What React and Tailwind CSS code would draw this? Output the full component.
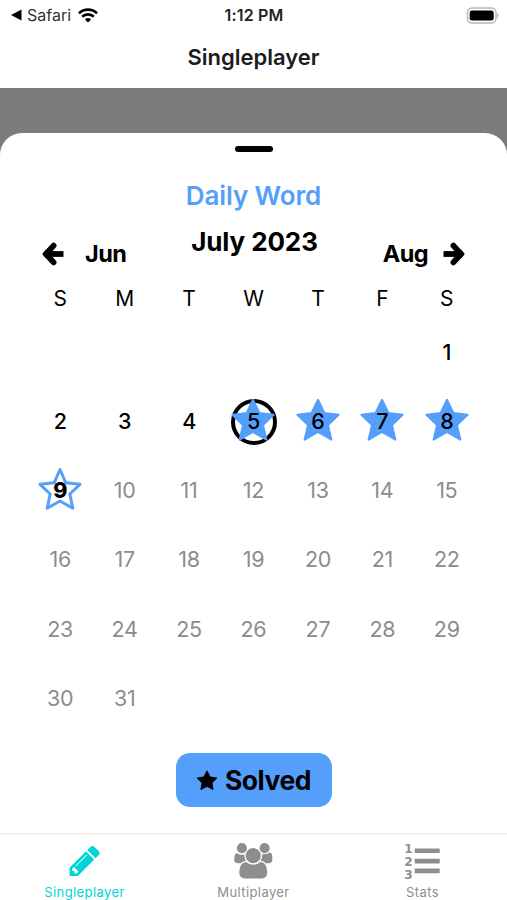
import clsx from 'clsx'

// ── Icons ───────────────────────────────────────────────────────────────────

function WifiIcon() {
  return (
    <svg width="20" height="15" viewBox="0 0 20 15" fill="none" stroke="currentColor" strokeWidth="2.7">
      <path d="M1 5.4a12.8 12.8 0 0 1 18 0" />
      <path d="M4.2 8.7a8.3 8.3 0 0 1 11.600 0" />
      <path d="M10 14.600 6.900 11.500a4.500 4.500 0 0 1 6.200 0Z" fill="currentColor" stroke="none" />
    </svg>
  )
}

function BatteryIcon() {
  return (
    <svg width="33" height="17" viewBox="0 0 33 17">
      <rect x="1.500" y="1" width="28.500" height="15" rx="4.500" fill="none" stroke="#b8b8b8" strokeWidth="1.500" />
      <rect x="3.700" y="3.400" width="24" height="10.200" rx="2.300" fill="#000" />
      <path d="M31.200 6.200v4.600q1.500-.7 1.500-2.300t-1.500-2.300Z" fill="#b8b8b8" />
    </svg>
  )
}

function ArrowIcon({ className }) {
  return (
    <svg className={className} width="24" height="26" viewBox="0 0 24 26" fill="none" stroke="currentColor" strokeWidth="5.800">
      <path d="M12.600 4.600 5 13l7.600 8.400" strokeLinecap="round" strokeLinejoin="round" />
      <path d="M5 13h17.500" />
      <path d="M1.200 13 5 8.800v8.400Z" fill="currentColor" stroke="none" />
    </svg>
  )
}

function DayStar({ outline }) {
  return (
    <svg
      className="absolute -mt-[3px] size-[44px] text-[#559ffc]"
      viewBox="0 0 44 44"
      fill={outline ? 'none' : 'currentColor'}
      stroke="currentColor"
      strokeWidth={outline ? 3 : 2}
      strokeLinejoin="round"
    >
      <path
        d={
          outline
            ? 'M22 2.500 27.800 15.800 42 17.300 31.800 27 34.800 41.200 22 34 9.200 41.200 12.200 27 2 17.300 16.200 15.800Z'
            : 'M22 1.800 28.400 15 42.600 16.800 32 27 35.400 41.700 22 34 8.600 41.700 12 27 1.400 16.800 15.600 15Z'
        }
      />
    </svg>
  )
}

function StarIcon() {
  return (
    <svg width="22" height="22" viewBox="0 0 1792 1792" fill="currentColor">
      <path d="M1728 647q0 22-26 48l-363 354 86 500q1 7 1 20 0 21-10.500 35.500t-30.500 14.500q-19 0-40-12l-449-236-449 236q-22 12-40 12-21 0-31.500-14.500t-10.500-35.500q0-6 2-20l86-500-364-354q-25-27-25-48 0-37 56-46l502-73 225-455q19-41 49-41t49 41l225 455 502 73q56 9 56 46z" />
    </svg>
  )
}

function PencilIcon() {
  return (
    <svg width="35.500" height="35.500" viewBox="0 0 1792 1792" fill="currentColor">
      <path d="M491 1536l91-91-235-235-91 91v107h128v128h107zm523-928q0-22-22-22-10 0-17 7l-542 542q-7 7-7 17 0 22 22 22 10 0 17-7l542-542q7-7 7-17zm-54-192l416 416-832 832h-416v-416zm683 96q0 53-37 90l-166 166-416-416 166-165q36-38 90-38 53 0 91 38l235 234q37 39 37 91z" />
    </svg>
  )
}

function UsersIcon() {
  return (
    <svg width="40.500" height="35.500" viewBox="0 0 2048 1792" fill="currentColor">
      <path d="M657 896q-162 5-265 128h-134q-82 0-138-40.500t-56-118.500q0-353 124-353 6 0 43.500 21t97.500 42.500 119 21.500q67 0 133-23-5 37-5 66 0 159 93 293zm1071 637q0 120-73 189.500t-194 69.500h-874q-121 0-194-69.500t-73-189.500q0-53 3.500-103.500t14-109 26.500-108.500 43-97.500 62-81 85.500-53.500 111.500-20q10 0 43 21.500t73 48 107 48 135 21.500 135-21.500 107-48 73-48 43-21.500q61 0 111.500 20t85.500 53.500 62 81 43 97.500 26.500 108.500 14 109 3.500 103.500zm-1024-1277q0 106-75 181t-181 75-181-75-75-181 75-181 181-75 181 75 75 181zm704 384q0 159-112.500 271.500t-271.500 112.500-271.500-112.500-112.500-271.500 112.500-271.500 271.500-112.500 271.500 112.500 112.500 271.500zm576 225q0 78-56 118.500t-138 40.500h-134q-103-123-265-128 93-134 93-293 0-29-5-66 66 23 133 23 59 0 119-21.500t97.500-42.500 43.500-21q124 0 124 353zm-128-609q0 106-75 181t-181 75-181-75-75-181 75-181 181-75 181 75 75 181z" />
    </svg>
  )
}

function StatsIcon() {
  return (
    <svg className="overflow-visible" width="36" height="37" viewBox="0 0 36 37" fill="currentColor">
      <g fontFamily="DejaVu Sans" fontWeight="700" fontSize="13">
        <text x="-0.700" y="10.400" textLength="8.800" lengthAdjust="spacingAndGlyphs">1</text>
        <text x="-0.700" y="22.900" textLength="8.800" lengthAdjust="spacingAndGlyphs">2</text>
        <text x="-0.700" y="35.700" textLength="8.800" lengthAdjust="spacingAndGlyphs">3</text>
      </g>
      <rect x="9.700" y="5.400" width="25" height="4.700" rx="0.600" />
      <rect x="9.700" y="15.700" width="25" height="4.700" rx="0.600" />
      <rect x="9.700" y="25.600" width="25" height="4.700" rx="0.600" />
    </svg>
  )
}

// ── Calendar data ───────────────────────────────────────────────────────────

const WEEKDAYS = ['S', 'M', 'T', 'W', 'T', 'F', 'S']
const FIRST_WEEKDAY = 6
const DAYS_IN_MONTH = 31
const TODAY = 9
const SELECTED = 5
const SOLVED = [5, 6, 7, 8]

const CELLS = [
  ...Array(FIRST_WEEKDAY).fill(null),
  ...Array.from({ length: DAYS_IN_MONTH }, (_, i) => i + 1),
]

const TABS = [
  { id: 'single', label: 'Singleplayer', icon: <PencilIcon />, active: true },
  { id: 'multi', label: 'Multiplayer', icon: <UsersIcon /> },
  { id: 'stats', label: 'Stats', icon: <StatsIcon /> },
]

function Day({ day }) {
  if (!day) return <div />

  return (
    <button className="relative flex items-center justify-center">
      {day === SELECTED && (
        <span className="absolute ml-px size-[46px] rounded-full border-4 border-black" />
      )}
      {SOLVED.includes(day) && <DayStar />}
      {day === TODAY && <DayStar outline />}
      <span
        className={clsx(
          'relative text-[21.5px] leading-none tracking-[-0.3px]',
          day < TODAY && 'font-medium text-black',
          day === TODAY && 'font-extrabold text-black',
          day > TODAY && 'text-[#8c8c8c]',
        )}
      >
        {day}
      </span>
    </button>
  )
}

export default function App() {
  return (
    <div className="flex h-[900px] w-[507px] flex-col overflow-hidden bg-white font-['Inter',sans-serif] text-black">
      {/* Status bar */}
      <div className="grid h-[30px] shrink-0 grid-cols-3 items-center pr-2 pl-[11px] text-[16px]">
        <div className="flex items-center">
          <svg width="11" height="12" viewBox="0 0 11 12">
            <path d="M0 6 10.500 0.500v11Z" />
          </svg>
          <span className="ml-[5px] text-[#333]">Safari</span>
          <span className="ml-[7px]"><WifiIcon /></span>
        </div>
        <span className="-ml-[2px] text-center font-semibold tracking-[0.2px] text-[#222]">1:12 PM</span>
        <div className="flex justify-end"><BatteryIcon /></div>
      </div>

      <header className="flex h-[58px] shrink-0 items-center justify-center pb-[3px]">
        <h1 className="text-[22px] font-semibold text-[#1c1c1e]">Singleplayer</h1>
      </header>

      {/* Dimmed backdrop with the sheet over it */}
      <main className="flex min-h-0 flex-1 flex-col bg-[#7a7c7d] pt-[45px]">
        <section className="flex flex-1 flex-col items-center rounded-t-[22px] bg-white">
          <div className="mt-[13px] h-[6px] w-[38px] rounded-full bg-black" />
          <h2 className="mt-[27px] text-[26px] leading-[34px] font-semibold tracking-[-0.1px] text-[#559ffc]">Daily Word</h2>

          <div className="mt-[12px] flex h-[60px] w-full justify-between px-[41px]">
            <button className="flex h-[58px] items-center gap-[20px] text-[23.5px] font-bold tracking-[-0.6px]">
              <ArrowIcon />
              Jun
            </button>
            <h3 className="text-[26px] leading-[34px] font-bold tracking-[-0.1px]">July 2023</h3>
            <button className="flex h-[58px] items-center gap-[14px] text-[23.5px] font-bold tracking-[-0.6px]">
              Aug
              <ArrowIcon className="-scale-x-100" />
            </button>
          </div>

          <div className="grid w-[451px] grid-cols-7 text-center text-[21px] leading-[28px]">
            {WEEKDAYS.map((name, i) => (
              <span key={i}>{name}</span>
            ))}
          </div>

          <div className="mt-[5px] grid w-[451px] auto-rows-[69.2px] grid-cols-7">
            {CELLS.map((day, i) => (
              <Day key={i} day={day} />
            ))}
          </div>

          <button className="mt-[20px] flex h-[54px] w-[156px] items-center justify-center gap-[7px] rounded-[14px] bg-[#559ffc] pt-[2px] text-[26.5px] font-bold tracking-[-0.5px]">
            <StarIcon />
            Solved
          </button>
        </section>
      </main>

      <nav className="grid h-[67px] shrink-0 grid-cols-3 border-t-2 border-[#f0f0f0]">
        {TABS.map(tab => (
          <button
            key={tab.id}
            className={clsx(
              'flex flex-col items-center pt-[8px] text-[13px] leading-[18px] tracking-[0.4px]',
              tab.active ? 'text-[#00d4d4]' : 'text-[#8e8e8e]',
            )}
          >
            <span className="flex h-[40px] items-start">{tab.icon}</span>
            {tab.label}
          </button>
        ))}
      </nav>
    </div>
  )
}
